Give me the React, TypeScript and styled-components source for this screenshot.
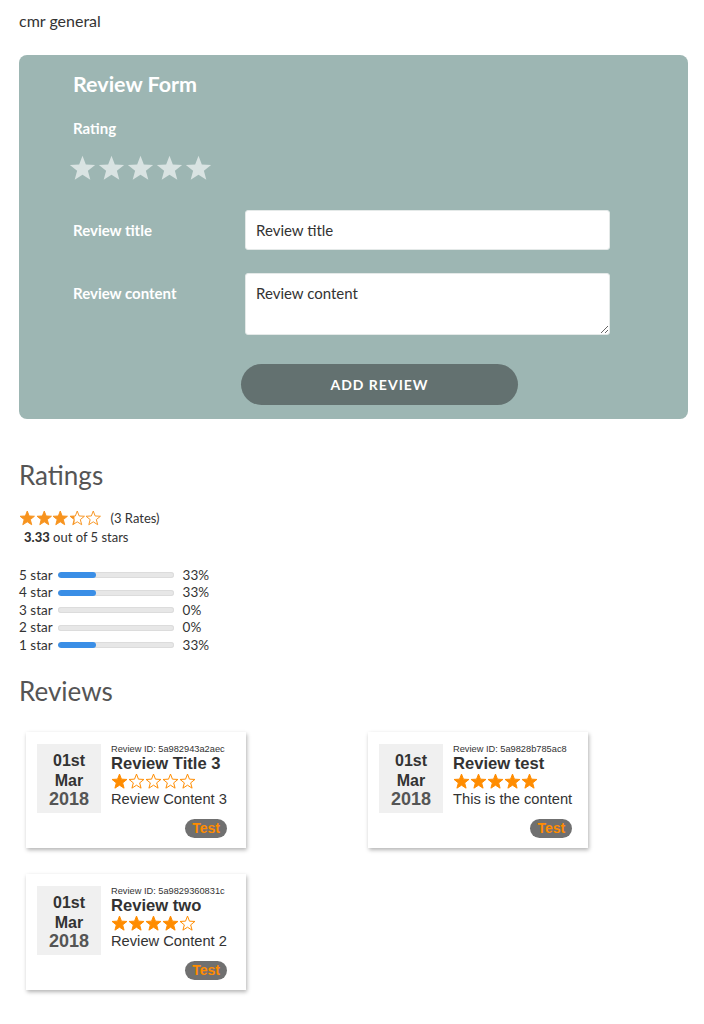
import React, { useId } from 'react';
import styled, { createGlobalStyle } from 'styled-components';

const GlobalStyle = createGlobalStyle`
  body {
    margin: 0;
    background: #fff;
    color: #333;
    font-family: Lato, 'Open Sans', sans-serif;
  }
  * {
    box-sizing: border-box;
  }
`;

const STAR_PATH = 'M12 1.5L14.76 8.7L22.46 9.1L16.47 13.95L18.47 21.4L12 17.2L5.53 21.4L7.53 13.95L1.54 9.1L9.24 8.7Z';

const BARS = [
  { label: '5 star', percent: 33 },
  { label: '4 star', percent: 33 },
  { label: '3 star', percent: 0 },
  { label: '2 star', percent: 0 },
  { label: '1 star', percent: 33 },
];

const REVIEWS = [
  { id: '5a982943a2aec', title: 'Review Title 3', rating: 1, content: 'Review Content 3' },
  { id: '5a9828b785ac8', title: 'Review test', rating: 5, content: 'This is the content' },
  { id: '5a9829360831c', title: 'Review two', rating: 4, content: 'Review Content 2' },
];

type StarProps = { fill: number; size: number; color: string; outline?: boolean };

function Star({ fill, size, color, outline = true }: StarProps) {
  const clipId = useId();
  return (
    <svg width={size} height={size} viewBox="0 0 24 24">
      <defs>
        <clipPath id={clipId}>
          <rect x="0" y="0" width={24 * fill} height="24" />
        </clipPath>
      </defs>
      {outline && <path d={STAR_PATH} fill="none" stroke={color} strokeWidth="1.4" strokeLinejoin="round" />}
      <path d={STAR_PATH} fill={color} clipPath={`url(#${clipId})`} />
    </svg>
  );
}

function StarRow({ value, size, color }: { value: number; size: number; color: string }) {
  return (
    <Stars>
      {[0, 1, 2, 3, 4].map((i) => (
        <Star key={i} fill={Math.max(0, Math.min(1, value - i))} size={size} color={color} />
      ))}
    </Stars>
  );
}

export default function App() {
  return (
    <Page>
      <GlobalStyle />
      <SiteName>cmr general</SiteName>

      <FormPanel>
        <FormTitle>Review Form</FormTitle>
        <FieldLabel>Rating</FieldLabel>
        <RatingPicker>
          {[0, 1, 2, 3, 4].map((i) => (
            <Star key={i} fill={1} size={29} color="#d9e3e2" outline={false} />
          ))}
        </RatingPicker>
        <FormGrid>
          <RowLabel>Review title</RowLabel>
          <TextInput defaultValue="Review title" />
          <RowLabel>Review content</RowLabel>
          <TextArea defaultValue="Review content" />
          <span />
          <SubmitButton type="button">ADD REVIEW</SubmitButton>
        </FormGrid>
      </FormPanel>

      <SectionTitle $top={41}>Ratings</SectionTitle>
      <Summary>
        <StarRow value={3.33} size={16.5} color="#f7931e" />
        <RateCount>(3 Rates)</RateCount>
      </Summary>
      <Average>
        <strong>3.33</strong> out of 5 stars
      </Average>
      <BarList>
        {BARS.map((bar) => (
          <BarRow key={bar.label}>
            <span>{bar.label}</span>
            <Track>
              <Fill style={{ width: `${bar.percent}%` }} />
            </Track>
            <Percent>{bar.percent}%</Percent>
          </BarRow>
        ))}
      </BarList>

      <SectionTitle $top={22}>Reviews</SectionTitle>
      <CardGrid>
        {REVIEWS.map((review) => (
          <Card key={review.id}>
            <DateBox>
              <span>01st</span>
              <span>Mar</span>
              <Year>2018</Year>
            </DateBox>
            <CardBody>
              <ReviewId>Review ID: {review.id}</ReviewId>
              <ReviewTitle>{review.title}</ReviewTitle>
              <StarRow value={review.rating} size={17} color="#ff8c00" />
              <ReviewText>{review.content}</ReviewText>
              <Badge>Test</Badge>
            </CardBody>
          </Card>
        ))}
      </CardGrid>
    </Page>
  );
}

const Page = styled.div`
  padding: 12px 16px 24px 19px;
`;

const SiteName = styled.div`
  font-size: 16px;
  line-height: 18px;
  color: #333;
`;

const FormPanel = styled.section`
  margin-top: 25px;
  width: 669px;
  background: #9db6b3;
  border-radius: 8px;
  padding: 17px 0 14px 54px;
  color: #fff;
`;

const FormTitle = styled.h2`
  margin: 0;
  font-size: 21.5px;
  line-height: 24px;
  font-weight: 700;
`;

const FieldLabel = styled.div`
  margin: 23px 0 17px;
  font-size: 15px;
  line-height: 18px;
  font-weight: 700;
`;

const Stars = styled.div`
  display: flex;

  svg {
    display: block;
  }
`;

const RatingPicker = styled(Stars)`
  margin-left: -5px;
`;

const FormGrid = styled.div`
  display: grid;
  grid-template-columns: 172px 365px;
  row-gap: 23px;
  margin-top: 27px;
`;

const RowLabel = styled.label`
  padding-top: 11px;
  font-size: 15px;
  line-height: 18px;
  font-weight: 700;
`;

const fieldStyles = `
  width: 100%;
  border: 1px solid #e4e9e8;
  border-radius: 3px;
  background: #fff;
  color: #333;
  font-family: Lato, 'Open Sans', sans-serif;
  font-size: 15px;
  padding: 10px;
  outline: none;
`;

const TextInput = styled.input`
  ${fieldStyles}
  height: 40px;
`;

const TextArea = styled.textarea`
  ${fieldStyles}
  height: 62px;
  line-height: 18px;
`;

const SubmitButton = styled.button`
  margin: 6px 0 0 -4px;
  width: 277px;
  height: 41px;
  border: none;
  border-radius: 21px;
  background: #637170;
  color: #fff;
  font-family: Lato, 'Open Sans', sans-serif;
  font-size: 14px;
  font-weight: 700;
  letter-spacing: 1px;
  cursor: pointer;
`;

const SectionTitle = styled.h2<{ $top: number }>`
  margin: ${(p) => p.$top}px 0 0;
  font-size: 26px;
  line-height: 30px;
  font-weight: 400;
  color: #555;
`;

const Summary = styled.div`
  display: flex;
  align-items: center;
  gap: 9px;
  margin-top: 20px;
`;

const RateCount = styled.span`
  font-size: 13px;
  color: #333;
`;

const Average = styled.div`
  margin: 2px 0 0 5px;
  font-size: 13px;
  line-height: 16px;

  strong {
    font-weight: 900;
  }
`;

const BarList = styled.div`
  margin-top: 22px;
  display: flex;
  flex-direction: column;
`;

const BarRow = styled.div`
  display: flex;
  align-items: center;
  gap: 5px;
  font-size: 13.5px;
  line-height: 17.5px;
  color: #333;
`;

const Track = styled.div`
  width: 116px;
  height: 6px;
  border-radius: 3px;
  background: #e7e7e7;
  box-shadow: inset 0 0 0 1px #dcdcdc;
  overflow: hidden;
`;

const Fill = styled.div`
  height: 100%;
  background: #3a8ee6;
  border-radius: 3px;
`;

const Percent = styled.span`
  margin-left: 4px;
`;

const CardGrid = styled.div`
  display: grid;
  grid-template-columns: 342px 220px;
  row-gap: 26px;
  margin: 26px 0 0 7px;
`;

const Card = styled.article`
  width: 220px;
  display: flex;
  gap: 10px;
  padding: 12px 12px 10px 11px;
  background: #fff;
  box-shadow: 1px 2px 4px rgba(0, 0, 0, 0.3);
  font-family: 'Liberation Sans', Arial, sans-serif;
`;

const DateBox = styled.div`
  flex: none;
  width: 64px;
  height: 69px;
  background: #f0f0f0;
  display: flex;
  flex-direction: column;
  align-items: center;
  padding-top: 7px;
  font-size: 16px;
  line-height: 19.5px;
  font-weight: 700;
  color: #333;
`;

const Year = styled.span`
  font-size: 18px;
  color: #555;
`;

const CardBody = styled.div`
  display: flex;
  flex-direction: column;
  align-items: flex-start;
  min-width: 0;
`;

const ReviewId = styled.div`
  font-size: 9.25px;
  line-height: 10px;
  color: #333;
`;

const ReviewTitle = styled.div`
  font-size: 16.6px;
  line-height: 19px;
  font-weight: 700;
  color: #333;
`;

const ReviewText = styled.div`
  font-size: 14.7px;
  line-height: 19px;
  color: #333;
  white-space: nowrap;
`;

const Badge = styled.span`
  align-self: flex-end;
  margin-top: 10px;
  padding: 0 7px;
  height: 19px;
  line-height: 19px;
  border-radius: 10px;
  background: #707070;
  color: #ff8c00;
  font-size: 14px;
  font-weight: 700;
`;
